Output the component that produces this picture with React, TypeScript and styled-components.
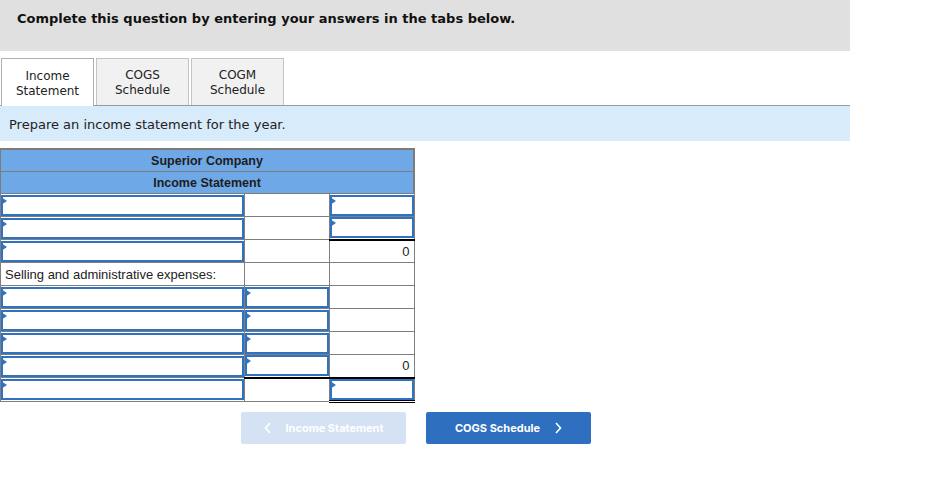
import React from 'react'
import styled, { createGlobalStyle, css } from 'styled-components'

const GlobalStyle = createGlobalStyle`
  body {
    margin: 0;
    background: #fff;
    font-family: "DejaVu Sans", Verdana, sans-serif;
  }
`

const Page = styled.div`
  width: 850px;
`

const Banner = styled.div`
  height: 51px;
  box-sizing: border-box;
  padding: 11px 0 0 17px;
  background-color: #e0e0e0;
  font-size: 13px;
  font-weight: bold;
  color: #111;
`

const TabBar = styled.div`
  display: flex;
  gap: 2px;
  margin-top: 7px;
  padding-left: 1px;
  height: 47px;
  border-bottom: 1px solid #9a9a9a;
`

const Tab = styled.div<{ $active?: boolean }>`
  width: 93px;
  box-sizing: border-box;
  display: flex;
  align-items: center;
  justify-content: center;
  text-align: center;
  font-size: 12px;
  line-height: 15px;
  color: #222;
  border: 1px solid #c4c4c4;
  border-bottom: none;
  background-color: ${(p) => (p.$active ? '#fff' : '#f1f1f1')};
  padding-top: 2px;
  ${(p) =>
    p.$active &&
    css`
      margin-bottom: -1px;
      border-color: #b0b0b0;
    `}
`

const Instruction = styled.div`
  height: 35px;
  box-sizing: border-box;
  padding: 11px 0 0 9px;
  background-color: #d8ebfa;
  font-size: 13px;
  color: #222;
`

const Sheet = styled.table`
  margin-top: 7px;
  width: 415px;
  border-collapse: collapse;
  font-family: "Liberation Sans", Arial, sans-serif;
  font-size: 13px;
  color: #222;
`

const HeadCell = styled.th<{ $first?: boolean }>`
  height: 21px;
  padding: 0;
  border: 1px solid #7c7c7c;
  border-right-width: 2px;
  ${(p) => p.$first && 'border-top-width: 2px;'}
  background-color: #6fa8e7;
  font-weight: bold;
  font-size: 12.5px;
  text-align: center;
  color: #1d1d1d;
`

const Cell = styled.td<{ $total?: boolean; $double?: boolean; $w?: number }>`
  height: 23px;
  box-sizing: border-box;
  padding: 0;
  border: 1px solid #7f7f7f;
  ${(p) => p.$w && `width: ${p.$w}px;`}
  ${(p) => p.$total && 'border-top: 2px solid #000;'}
  ${(p) => p.$double && 'border-bottom: 3px double #000;'}
`

const Label = styled.span`
  display: block;
  padding-left: 4px;
  font-size: 13px;
`

const Amount = styled.span`
  display: block;
  text-align: right;
  padding-right: 4px;
  font-size: 13px;
`

const Field = styled.div`
  position: relative;
  height: 21px;
  box-sizing: border-box;
  border: 2px solid #2f72c1;
  background: #fff;

  &::before {
    content: '';
    position: absolute;
    left: -2px;
    top: 0;
    border-style: solid;
    border-width: 4px 0 4px 6px;
    border-color: transparent transparent transparent #2f72c1;
  }
`

const Nav = styled.div`
  display: flex;
  gap: 20px;
  padding-left: 241px;
  margin-top: 9px;
`

const NavButton = styled.button<{ $disabled?: boolean }>`
  width: 165px;
  height: 32px;
  display: flex;
  align-items: center;
  justify-content: center;
  gap: 14px;
  border: none;
  border-radius: 2px;
  font-family: Inter, "Liberation Sans", sans-serif;
  font-weight: bold;
  font-size: 11px;
  color: #fff;
  background-color: ${(p) => (p.$disabled ? '#d5e2f3' : '#2e6fbf')};
  cursor: ${(p) => (p.$disabled ? 'default' : 'pointer')};
`

const Chevron = ({ dir }: { dir: 'left' | 'right' }) => (
  <svg width="8" height="12" viewBox="0 0 8 12" fill="none">
    <path
      d={dir === 'left' ? 'M6 1L1.5 6L6 11' : 'M2 1L6.5 6L2 11'}
      stroke="#fff"
      strokeWidth="1.6"
    />
  </svg>
)

type Slot = 'input' | 'blank' | string

interface Row {
  a: Slot
  b: Slot
  c: Slot
  totalB?: boolean
  totalC?: boolean
  doubleC?: boolean
}

const rows: Row[] = [
  { a: 'input', b: 'blank', c: 'input' },
  { a: 'input', b: 'blank', c: 'input' },
  { a: 'input', b: 'blank', c: '0', totalC: true },
  { a: 'Selling and administrative expenses:', b: 'blank', c: 'blank' },
  { a: 'input', b: 'input', c: 'blank' },
  { a: 'input', b: 'input', c: 'blank' },
  { a: 'input', b: 'input', c: 'blank' },
  { a: 'input', b: 'input', c: '0' },
  { a: 'input', b: 'blank', c: 'input', totalB: true, totalC: true, doubleC: true },
]

const renderSlot = (s: Slot, isLabel: boolean) => {
  if (s === 'input') return <Field />
  if (s === 'blank') return null
  return isLabel ? <Label>{s}</Label> : <Amount>{s}</Amount>
}

export default function App() {
  return (
    <Page>
      <GlobalStyle />
      <Banner>Complete this question by entering your answers in the tabs below.</Banner>
      <TabBar>
        <Tab $active>
          Income
          <br />
          Statement
        </Tab>
        <Tab>
          COGS
          <br />
          Schedule
        </Tab>
        <Tab>
          COGM
          <br />
          Schedule
        </Tab>
      </TabBar>
      <Instruction>Prepare an income statement for the year.</Instruction>
      <Sheet>
        <thead>
          <tr>
            <HeadCell colSpan={3} $first>
              Superior Company
            </HeadCell>
          </tr>
          <tr>
            <HeadCell colSpan={3}>Income Statement</HeadCell>
          </tr>
        </thead>
        <tbody>
          {rows.map((r, i) => (
            <tr key={i}>
              <Cell $w={245}>{renderSlot(r.a, true)}</Cell>
              <Cell $w={85} $total={r.totalB}>
                {renderSlot(r.b, false)}
              </Cell>
              <Cell $w={85} $total={r.totalC} $double={r.doubleC}>
                {renderSlot(r.c, false)}
              </Cell>
            </tr>
          ))}
        </tbody>
      </Sheet>
      <Nav>
        <NavButton $disabled>
          <Chevron dir="left" />
          Income Statement
        </NavButton>
        <NavButton>
          COGS Schedule
          <Chevron dir="right" />
        </NavButton>
      </Nav>
    </Page>
  )
}
